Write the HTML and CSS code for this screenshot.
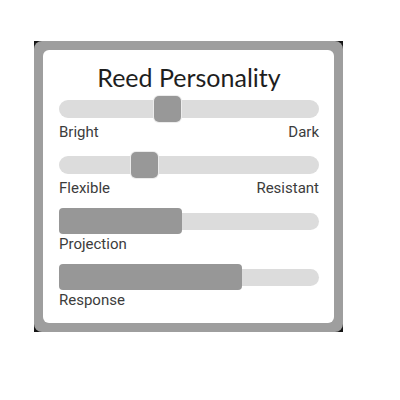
FILE: index.html
```html
<!DOCTYPE html>
<html lang="en">
<head>
  <meta charset="UTF-8">
  <title>Reed Personality</title>
  <meta name="viewport" content="width=device-width, initial-scale=1.0">
  <link rel="stylesheet" href="styles.css">
</head>
<body>
  <div class="frame">
    <div class="bezel">
      <div class="card">
        <h1>Reed Personality</h1>

        <div class="row">
          <div class="track"></div>
          <div class="thumb" style="left: 36.4%"></div>
        </div>
        <div class="labels"><span>Bright</span><span>Dark</span></div>

        <div class="row">
          <div class="track"></div>
          <div class="thumb" style="left: 27.5%"></div>
        </div>
        <div class="labels"><span>Flexible</span><span>Resistant</span></div>

        <div class="row">
          <div class="track bar-track"></div>
          <div class="fill" style="width: 47.3%"></div>
        </div>
        <div class="labels"><span>Projection</span></div>

        <div class="row">
          <div class="track bar-track"></div>
          <div class="fill" style="width: 70.5%"></div>
        </div>
        <div class="labels"><span>Response</span></div>
      </div>
    </div>
  </div>
</body>
</html>
```

FILE: styles.css
```css
* { margin: 0; padding: 0; box-sizing: border-box; }
body {
  background: #fff;
  font-family: Roboto, 'Liberation Sans', sans-serif;
  color: #3c3c3c;
}
.frame {
  margin: 41px 0 0 34px;
  width: 309px;
  height: 291px;
  background: #151515;
}
.bezel {
  height: 100%;
  padding: 9px;
  border-radius: 8px;
  background: #9e9e9e;
}
.card {
  height: 100%;
  padding: 13px 15px 0 16px;
  border-radius: 6px;
  background: #fff;
}
h1 {
  font-family: Lato, 'Open Sans', sans-serif;
  font-weight: normal;
  font-size: 25px;
  line-height: 28px;
  text-align: center;
  color: #1e1e1e;
  margin-bottom: 5px;
}
.row {
  position: relative;
  height: 26px;
  display: flex;
  align-items: center;
}
.track {
  width: 100%;
  height: 18px;
  border-radius: 9px;
  background: #dcdcdc;
}
.bar-track {
  height: 17px;
}
.thumb {
  position: absolute;
  top: 0;
  width: 27px;
  height: 26px;
  border-radius: 5px;
  background: #989898;
  box-shadow: 0 0 0 1px #ececec;
}
.fill {
  position: absolute;
  top: 0;
  left: 0;
  height: 26px;
  border-radius: 4px;
  background: #979797;
}
.labels {
  display: flex;
  justify-content: space-between;
  font-size: 15px;
  line-height: 18px;
  margin: 1px 0 11px;
}
```
